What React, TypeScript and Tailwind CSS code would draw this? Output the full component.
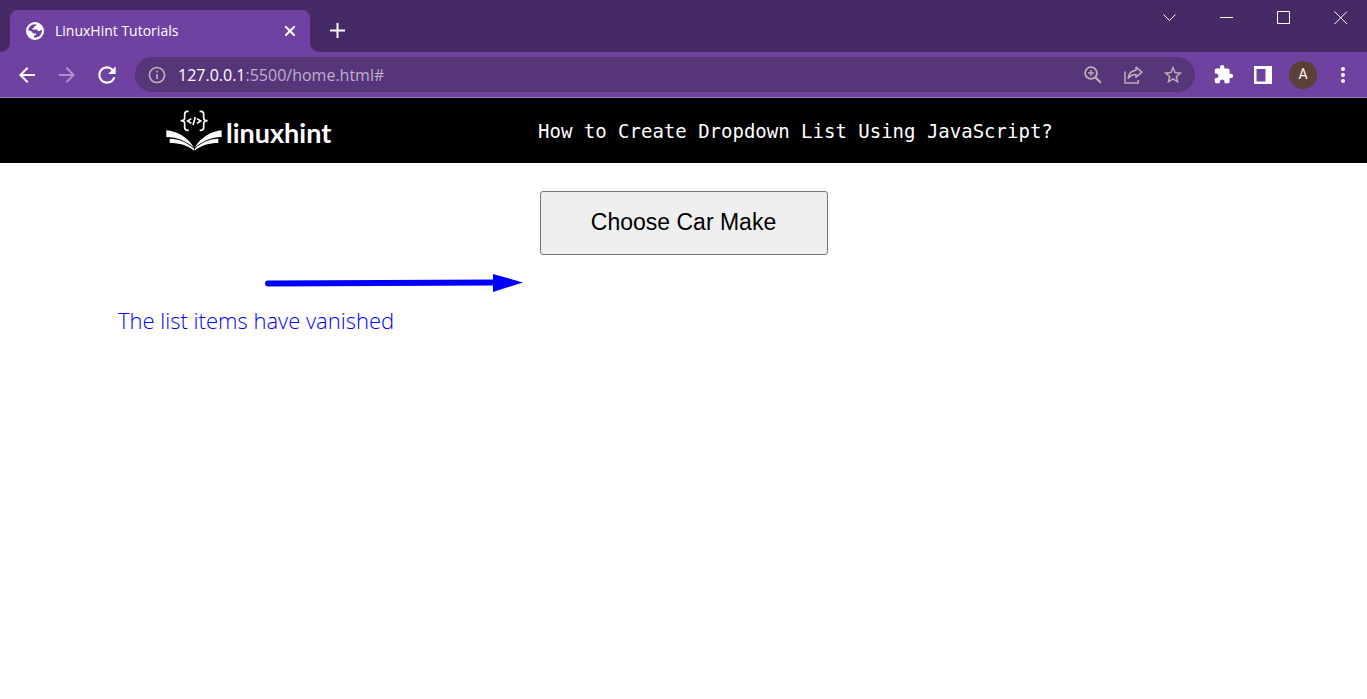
import type { ReactNode } from 'react'
import {
  MdArrowBack,
  MdArrowForward,
  MdExtension,
  MdInfoOutline,
  MdMoreVert,
  MdRefresh,
  MdStarBorder,
} from 'react-icons/md'

function GlobeIcon() {
  return (
    <svg viewBox="0 0 18 18" className="h-[18px] w-[18px] shrink-0">
      <circle cx="9" cy="9" r="9" fill="#fff" />
      <path
        d="M2.2 8.2C2.4 5.6 4.2 3.2 6.8 2.4L10.4 2.2C10.4 3.8 9.2 4 8.2 4.6L7.8 6L6.2 6.4V7.4H9.6C11 7.4 11.8 8 12 9H13.4C14.4 9 14.4 7.8 15.8 7.8C16.2 10.8 14.6 13.6 12.2 15L8 15.8V13.6C9.4 13.4 10.2 12.8 10.2 11.4H8.4C7 11.4 6.2 10.4 5.8 9.4Z"
        fill="#6f42a1"
      />
    </svg>
  )
}

function ZoomIcon() {
  return (
    <svg viewBox="0 0 18 18" className="h-[18px] w-[18px]" fill="none" stroke="currentColor">
      <circle cx="7" cy="7" r="5.9" strokeWidth="1.8" />
      <path d="M11.3 11.3L16.8 16.8" strokeWidth="2.2" />
      <path d="M7 4V10M4 7H10" strokeWidth="1.4" />
    </svg>
  )
}

function ShareIcon() {
  return (
    <svg viewBox="0 0 20 20" className="h-5 w-5" fill="none" stroke="currentColor" strokeWidth="1.5">
      <path d="M2 6.5V18H15.2V15" />
      <path d="M13 2.2L19 7.2L13 12.2V9.4C9.4 9.4 7 10.6 5.2 13.4C5.6 9.2 8.4 5.8 13 5.3Z" strokeLinejoin="round" />
    </svg>
  )
}

function LogoMark() {
  return (
    <svg viewBox="33 35 168 123" className="h-[41px] w-14 shrink-0" fill="#fff">
      <path d="M34 96C66 99 98 116 117 148C97 130 66 116 34 116Z" />
      <path d="M44 121C72 121 98 133 117 151V157C98 141 74 134 44 134Z" />
      <path d="M200 96C170 99 138 116 119 148C139 130 170 116 200 116Z" />
      <path d="M190 121C164 121 138 133 119 151V157C138 141 162 134 190 134Z" />
      <g fill="none" stroke="#fff" strokeWidth="5">
        <path d="M101 39H97C91 39 89 42 89 47V58C89 64 85 67 77 67C85 67 89 70 89 76V87C89 93 91 96 97 96H101" />
        <path d="M134 39H138C144 39 146 42 146 47V58C146 64 150 67 158 67C150 67 146 70 146 76V87C146 93 144 96 138 96H134" />
        <path d="M109 61L98 68L109 75M126 61L137 68L126 75M121 56L114 80" />
      </g>
    </svg>
  )
}

function IconButton({ label, dim, children }: { label: string; dim?: boolean; children: ReactNode }) {
  return (
    <button
      aria-label={label}
      className={
        dim
          ? 'flex h-6 w-6 items-center justify-center text-[#b08fd0]'
          : 'flex h-6 w-6 items-center justify-center text-white'
      }
    >
      {children}
    </button>
  )
}

function WindowButton({ label, d }: { label: string; d: string }) {
  return (
    <button aria-label={label} className="h-[14px] w-[14px]">
      <svg viewBox="0 0 14 14" className="h-[14px] w-[14px]" fill="none" stroke="#fff" strokeWidth="1">
        <path d={d} />
      </svg>
    </button>
  )
}

function TabStrip() {
  return (
    <div className="flex h-[52px] items-start bg-[#462a65]">
      <div className="flex h-[52px] items-end">
        <svg viewBox="0 0 10 10" className="h-[10px] w-[10px]">
          <path d="M10 0V10H0C6 10 10 6 10 0Z" fill="#6f42a1" />
        </svg>
        <div className="flex h-[42px] w-[300px] items-center rounded-t-lg bg-[#6f42a1] pr-3 pl-4 text-white">
          <GlobeIcon />
          <span className="ml-[11px] flex-1 font-['Open_Sans','Noto_Sans',sans-serif] text-[14px] leading-5">
            LinuxHint Tutorials
          </span>
          <button aria-label="Close tab" className="p-[3px]">
            <svg viewBox="0 0 10 10" className="h-[10px] w-[10px]" stroke="#fff" strokeWidth="2">
              <path d="M0 0L10 10M10 0L0 10" />
            </svg>
          </button>
        </div>
        <svg viewBox="0 0 10 10" className="h-[10px] w-[10px]">
          <path d="M0 0V10H10C4 10 0 6 0 0Z" fill="#6f42a1" />
        </svg>
      </div>
      <button aria-label="New tab" className="mt-[23px] ml-[10px]">
        <svg viewBox="0 0 15 15" className="h-[15px] w-[15px]" stroke="#fff" strokeWidth="2">
          <path d="M7.5 0V15M0 7.5H15" />
        </svg>
      </button>
      <div className="mt-[11px] ml-auto flex gap-[43px] pr-[19px]">
        <WindowButton label="Search tabs" d="M0.5 3.5L6.5 9.5L12.5 3.5" />
        <WindowButton label="Minimize" d="M0 6.5H13" />
        <WindowButton label="Maximize" d="M0.5 0.5H12.5V12.5H0.5Z" />
        <WindowButton label="Close" d="M0.5 0.5L13 13M13 0.5L0.5 13" />
      </div>
    </div>
  )
}

function Toolbar() {
  return (
    <div className="flex h-[46px] items-center border-b border-[#9a7bc0] bg-[#6f42a1] pr-3 pl-[15px]">
      <div className="flex gap-4">
        <IconButton label="Back">
          <MdArrowBack size={24} />
        </IconButton>
        <IconButton label="Forward" dim>
          <MdArrowForward size={24} />
        </IconButton>
        <IconButton label="Reload">
          <MdRefresh size={26} className="shrink-0" />
        </IconButton>
      </div>
      <div className="ml-4 flex h-[35px] flex-1 items-center rounded-full bg-[#563679] pr-[10px] pl-3 text-[#bcb0b9]">
        <MdInfoOutline size={20} className="shrink-0" />
        <div className="ml-[11px] flex-1 font-['Open_Sans','Noto_Sans',sans-serif] text-[16px] leading-6 text-[#bfafd0]">
          <span className="text-white">127.0.0.1</span>:5500/home.html#
        </div>
        <div className="flex items-center gap-4">
          <button aria-label="Zoom" className="flex h-6 w-6 items-center justify-center">
            <ZoomIcon />
          </button>
          <button aria-label="Share" className="flex h-6 w-6 items-center justify-center">
            <ShareIcon />
          </button>
          <button aria-label="Bookmark" className="flex h-6 w-6 items-center justify-center">
            <MdStarBorder size={22} />
          </button>
        </div>
      </div>
      <div className="ml-4 flex items-center gap-4">
        <IconButton label="Extensions">
          <MdExtension size={21} />
        </IconButton>
        <IconButton label="Side panel">
          <svg viewBox="0 0 18 18" className="h-[18px] w-[18px]">
            <path d="M0 0H18V18H0ZM2.5 3V15.5H11.5V3Z" fill="#fff" fillRule="evenodd" />
          </svg>
        </IconButton>
        <button
          aria-label="Profile"
          className="-mx-[2px] flex h-7 w-7 items-center justify-center rounded-full bg-[#5c4037] font-['Roboto',sans-serif] text-[14px] text-white"
        >
          A
        </button>
        <IconButton label="Menu">
          <MdMoreVert size={24} />
        </IconButton>
      </div>
    </div>
  )
}

export default function App() {
  return (
    <div className="min-h-screen bg-white">
      <TabStrip />
      <Toolbar />
      <header className="flex h-[65px] items-center bg-black pl-[166px] text-white">
        <a href="#" className="flex w-[164px] items-end gap-1">
          <LogoMark />
          <span className="font-['Lato',sans-serif] text-[27px] leading-9 font-bold">linuxhint</span>
        </a>
        <h1 className="ml-52 font-['DejaVu_Sans_Mono',monospace] text-[19px] leading-6 whitespace-nowrap">
          How to Create Dropdown List Using JavaScript?
        </h1>
      </header>
      <main className="pt-7">
        <button className="mx-auto block h-16 w-72 rounded-[3px] border border-[#767676] bg-[#efefef] pb-[3px] font-['Liberation_Sans',sans-serif] text-[23px] leading-7 text-black">
          Choose Car Make
        </button>
        <div className="pt-[19px] pl-[118px] text-[#0000ff]">
          <svg viewBox="0 0 258 18" className="ml-[147px] h-[18px] w-[258px]">
            <path d="M3 9.5L230 8.5" stroke="currentColor" strokeWidth="6" strokeLinecap="round" />
            <path d="M228 0L258 8.5L228 18Z" fill="currentColor" />
          </svg>
          <p className="mt-3 font-['Open_Sans',sans-serif] text-[22px] leading-8 font-light">
            The list items have vanished
          </p>
        </div>
      </main>
    </div>
  )
}
